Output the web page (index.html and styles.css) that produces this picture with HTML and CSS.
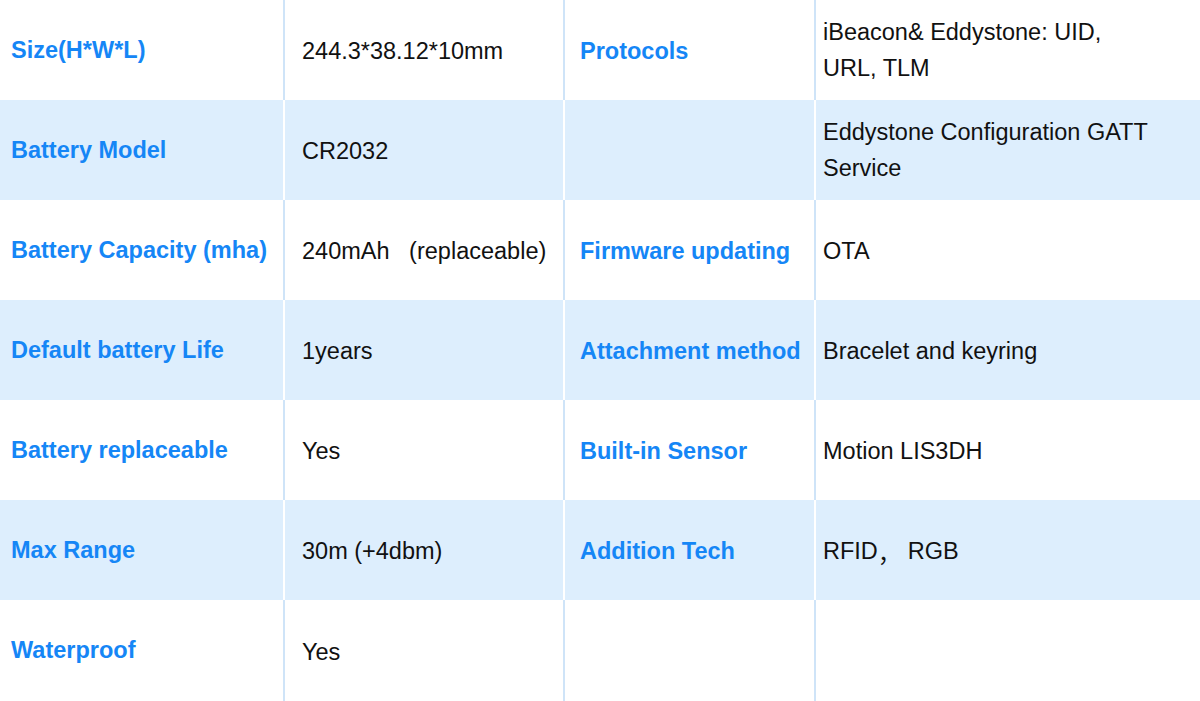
FILE: index.html
```html
<!DOCTYPE html>
<html>
<head>
<meta charset="utf-8">
<link rel="stylesheet" href="styles.css">
</head>
<body>
<div class="table">
  <div class="row plain">
    <div class="cell label c1">Size(H*W*L)</div>
    <div class="cell value c2">244.3*38.12*10mm</div>
    <div class="cell label c3">Protocols</div>
    <div class="cell value c4 multi">iBeacon&amp; Eddystone: UID,<br>URL, TLM</div>
  </div>
  <div class="row tint">
    <div class="cell label c1">Battery Model</div>
    <div class="cell value c2">CR2032</div>
    <div class="cell label c3"></div>
    <div class="cell value c4 multi">Eddystone Configuration GATT<br>Service</div>
  </div>
  <div class="row plain">
    <div class="cell label c1">Battery Capacity (mha)</div>
    <div class="cell value c2">240mAh&nbsp;&nbsp; (replaceable)</div>
    <div class="cell label c3">Firmware updating</div>
    <div class="cell value c4">OTA</div>
  </div>
  <div class="row tint">
    <div class="cell label c1">Default battery Life</div>
    <div class="cell value c2">1years</div>
    <div class="cell label c3">Attachment method</div>
    <div class="cell value c4">Bracelet and keyring</div>
  </div>
  <div class="row plain">
    <div class="cell label c1">Battery replaceable</div>
    <div class="cell value c2">Yes</div>
    <div class="cell label c3">Built-in Sensor</div>
    <div class="cell value c4">Motion LIS3DH</div>
  </div>
  <div class="row tint">
    <div class="cell label c1">Max Range</div>
    <div class="cell value c2">30m (+4dbm)</div>
    <div class="cell label c3">Addition Tech</div>
    <div class="cell value c4">RFID<span class="cjk">，</span>&nbsp;RGB</div>
  </div>
  <div class="row plain last">
    <div class="cell label c1">Waterproof</div>
    <div class="cell value c2">Yes</div>
    <div class="cell label c3"></div>
    <div class="cell value c4"></div>
  </div>
</div>
</body>
</html>
```
FILE: styles.css
```css
* { box-sizing: border-box; }
html, body { margin: 0; padding: 0; background: #ffffff; }
body {
  font-family: "Liberation Sans", Arial, sans-serif;
  font-size: 23.5px;
  width: 1200px;
  height: 701px;
  overflow: hidden;
}
.table { display: flex; flex-direction: column; }
.row {
  display: grid;
  grid-template-columns: 283px 278px 249px 1fr;
  column-gap: 2px;
  height: 100px;
}
.row.last { height: 101px; }
.row.plain { background: #cfe4f8; }
.row.plain .cell { background: #ffffff; }
.row.tint { background: #ffffff; }
.row.tint .cell { background: #ddeefd; }
.cell {
  display: flex;
  align-items: center;
  white-space: nowrap;
}
.label { color: #1586f6; font-weight: bold; }
.value { color: #111111; padding-top: 3px; }
.c1 { padding-left: 11px; }
.c2 { padding-left: 17px; }
.c3 { padding-left: 15px; padding-top: 3px; }
.c4 { padding-left: 7px; }
.multi { line-height: 36px; padding-top: 0; }
.cjk { font-family: "Noto Sans CJK SC", sans-serif; }
```
